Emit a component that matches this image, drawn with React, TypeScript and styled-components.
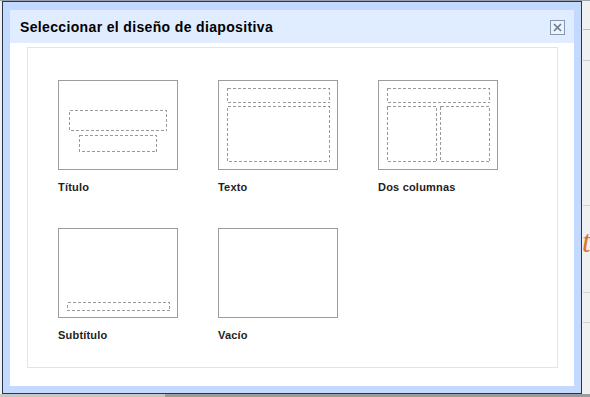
import React from "react";
import styled, { createGlobalStyle } from "styled-components";

type Box = [number, number, number, number];

interface Layout {
  name: string;
  boxes: Box[];
}

const layouts: Layout[] = [
  { name: "Título", boxes: [[11, 30, 97, 20], [21, 55, 77, 16]] },
  { name: "Texto", boxes: [[9, 8, 102, 14], [9, 26, 102, 55]] },
  { name: "Dos columnas", boxes: [[9, 8, 102, 14], [9, 26, 49, 55], [62, 26, 49, 55]] },
  { name: "Subtítulo", boxes: [[9, 74, 102, 8]] },
  { name: "Vacío", boxes: [] },
];

const GlobalStyle = createGlobalStyle`
  html, body {
    margin: 0;
    padding: 0;
  }
  body {
    background: #ececec;
    font-family: "Liberation Sans", Arial, sans-serif;
    overflow: hidden;
  }
`;

const Page = styled.div`
  position: relative;
  width: 590px;
  height: 397px;
  overflow: hidden;
  background:
    linear-gradient(#9aa3ad, #9aa3ad) 0 0 / 100% 1px no-repeat,
    linear-gradient(#c7c7c7, #c7c7c7) 0 394px / 165px 3px no-repeat,
    linear-gradient(#9c9c9c, #9c9c9c) 165px 394px / 100% 3px no-repeat,
    linear-gradient(#b9bfc8, #b9bfc8) 583px 29px / 7px 1px no-repeat,
    linear-gradient(#c9ced6, #c9ced6) 583px 60px / 7px 1px no-repeat,
    linear-gradient(#d3d3d3, #d3d3d3) 583px 205px / 7px 1px no-repeat,
    linear-gradient(#d3d3d3, #d3d3d3) 583px 292px / 7px 1px no-repeat,
    linear-gradient(#d3d3d3, #d3d3d3) 583px 322px / 7px 1px no-repeat,
    #f0f0f0;
`;

const BackLetter = styled.span`
  position: absolute;
  left: 582px;
  top: 224px;
  font-family: "Liberation Serif", serif;
  font-style: italic;
  font-size: 31px;
  color: #d9772e;
`;

const Dialog = styled.div`
  position: absolute;
  left: 2px;
  top: 1px;
  width: 564px;
  height: 376px;
  padding: 8px 7px 7px 7px;
  border: 1px solid #27364a;
  background: #c3d9ff;
  display: flex;
  flex-direction: column;
`;

const Header = styled.div`
  height: 33px;
  flex-shrink: 0;
  display: flex;
  align-items: center;
  justify-content: space-between;
  padding: 0 9px 0 10px;
  background: #e0ecff;
`;

const Title = styled.div`
  font-size: 14px;
  font-weight: bold;
  letter-spacing: 0.35px;
  color: #000;
  padding-top: 1px;
`;

const CloseButton = styled.div`
  width: 13px;
  height: 13px;
  border: 1px solid #8697b4;
  background: #eef3fb;
  display: flex;
  align-items: center;
  justify-content: center;
  margin-top: 2px;
`;

const Body = styled.div`
  flex: 1;
  background: #fff;
  padding: 4px 16px 18px 17px;
  display: flex;
`;

const Panel = styled.div`
  flex: 1;
  border: 1px solid #e4e4e4;
  padding: 32px 0 0 30px;
  display: grid;
  grid-template-columns: repeat(3, 120px);
  grid-auto-rows: max-content;
  column-gap: 40px;
  row-gap: 34px;
`;

const Item = styled.div`
  display: flex;
  flex-direction: column;
`;

const Thumb = styled.div`
  width: 118px;
  height: 88px;
  border: 1px solid #9c9c9c;
  background: #fff;

  svg {
    display: block;
  }
`;

const Label = styled.div`
  margin-top: 11px;
  font-size: 11px;
  line-height: 13px;
  font-weight: bold;
  letter-spacing: 0.2px;
  color: #222;
`;

const Preview = ({ boxes }: { boxes: Box[] }) => (
  <svg width="118" height="88" viewBox="1 1 118 88">
    {boxes.map(([x, y, w, h], i) => (
      <rect
        key={i}
        x={x + 0.5}
        y={y + 0.5}
        width={w}
        height={h}
        fill="none"
        stroke="#9a9a9a"
        strokeWidth="1"
        strokeDasharray="3 2"
        shapeRendering="crispEdges"
      />
    ))}
  </svg>
);

const App = () => {
  return (
    <Page>
      <GlobalStyle />
      <BackLetter>t</BackLetter>
      <Dialog>
        <Header>
          <Title>Seleccionar el diseño de diapositiva</Title>
          <CloseButton>
            <svg width="9" height="9" viewBox="0 0 9 9">
              <path d="M1 1L8 8M8 1L1 8" stroke="#66778f" strokeWidth="1.6" />
            </svg>
          </CloseButton>
        </Header>
        <Body>
          <Panel>
            {layouts.map((l) => (
              <Item key={l.name}>
                <Thumb>
                  <Preview boxes={l.boxes} />
                </Thumb>
                <Label>{l.name}</Label>
              </Item>
            ))}
          </Panel>
        </Body>
      </Dialog>
    </Page>
  );
};

export default App;
